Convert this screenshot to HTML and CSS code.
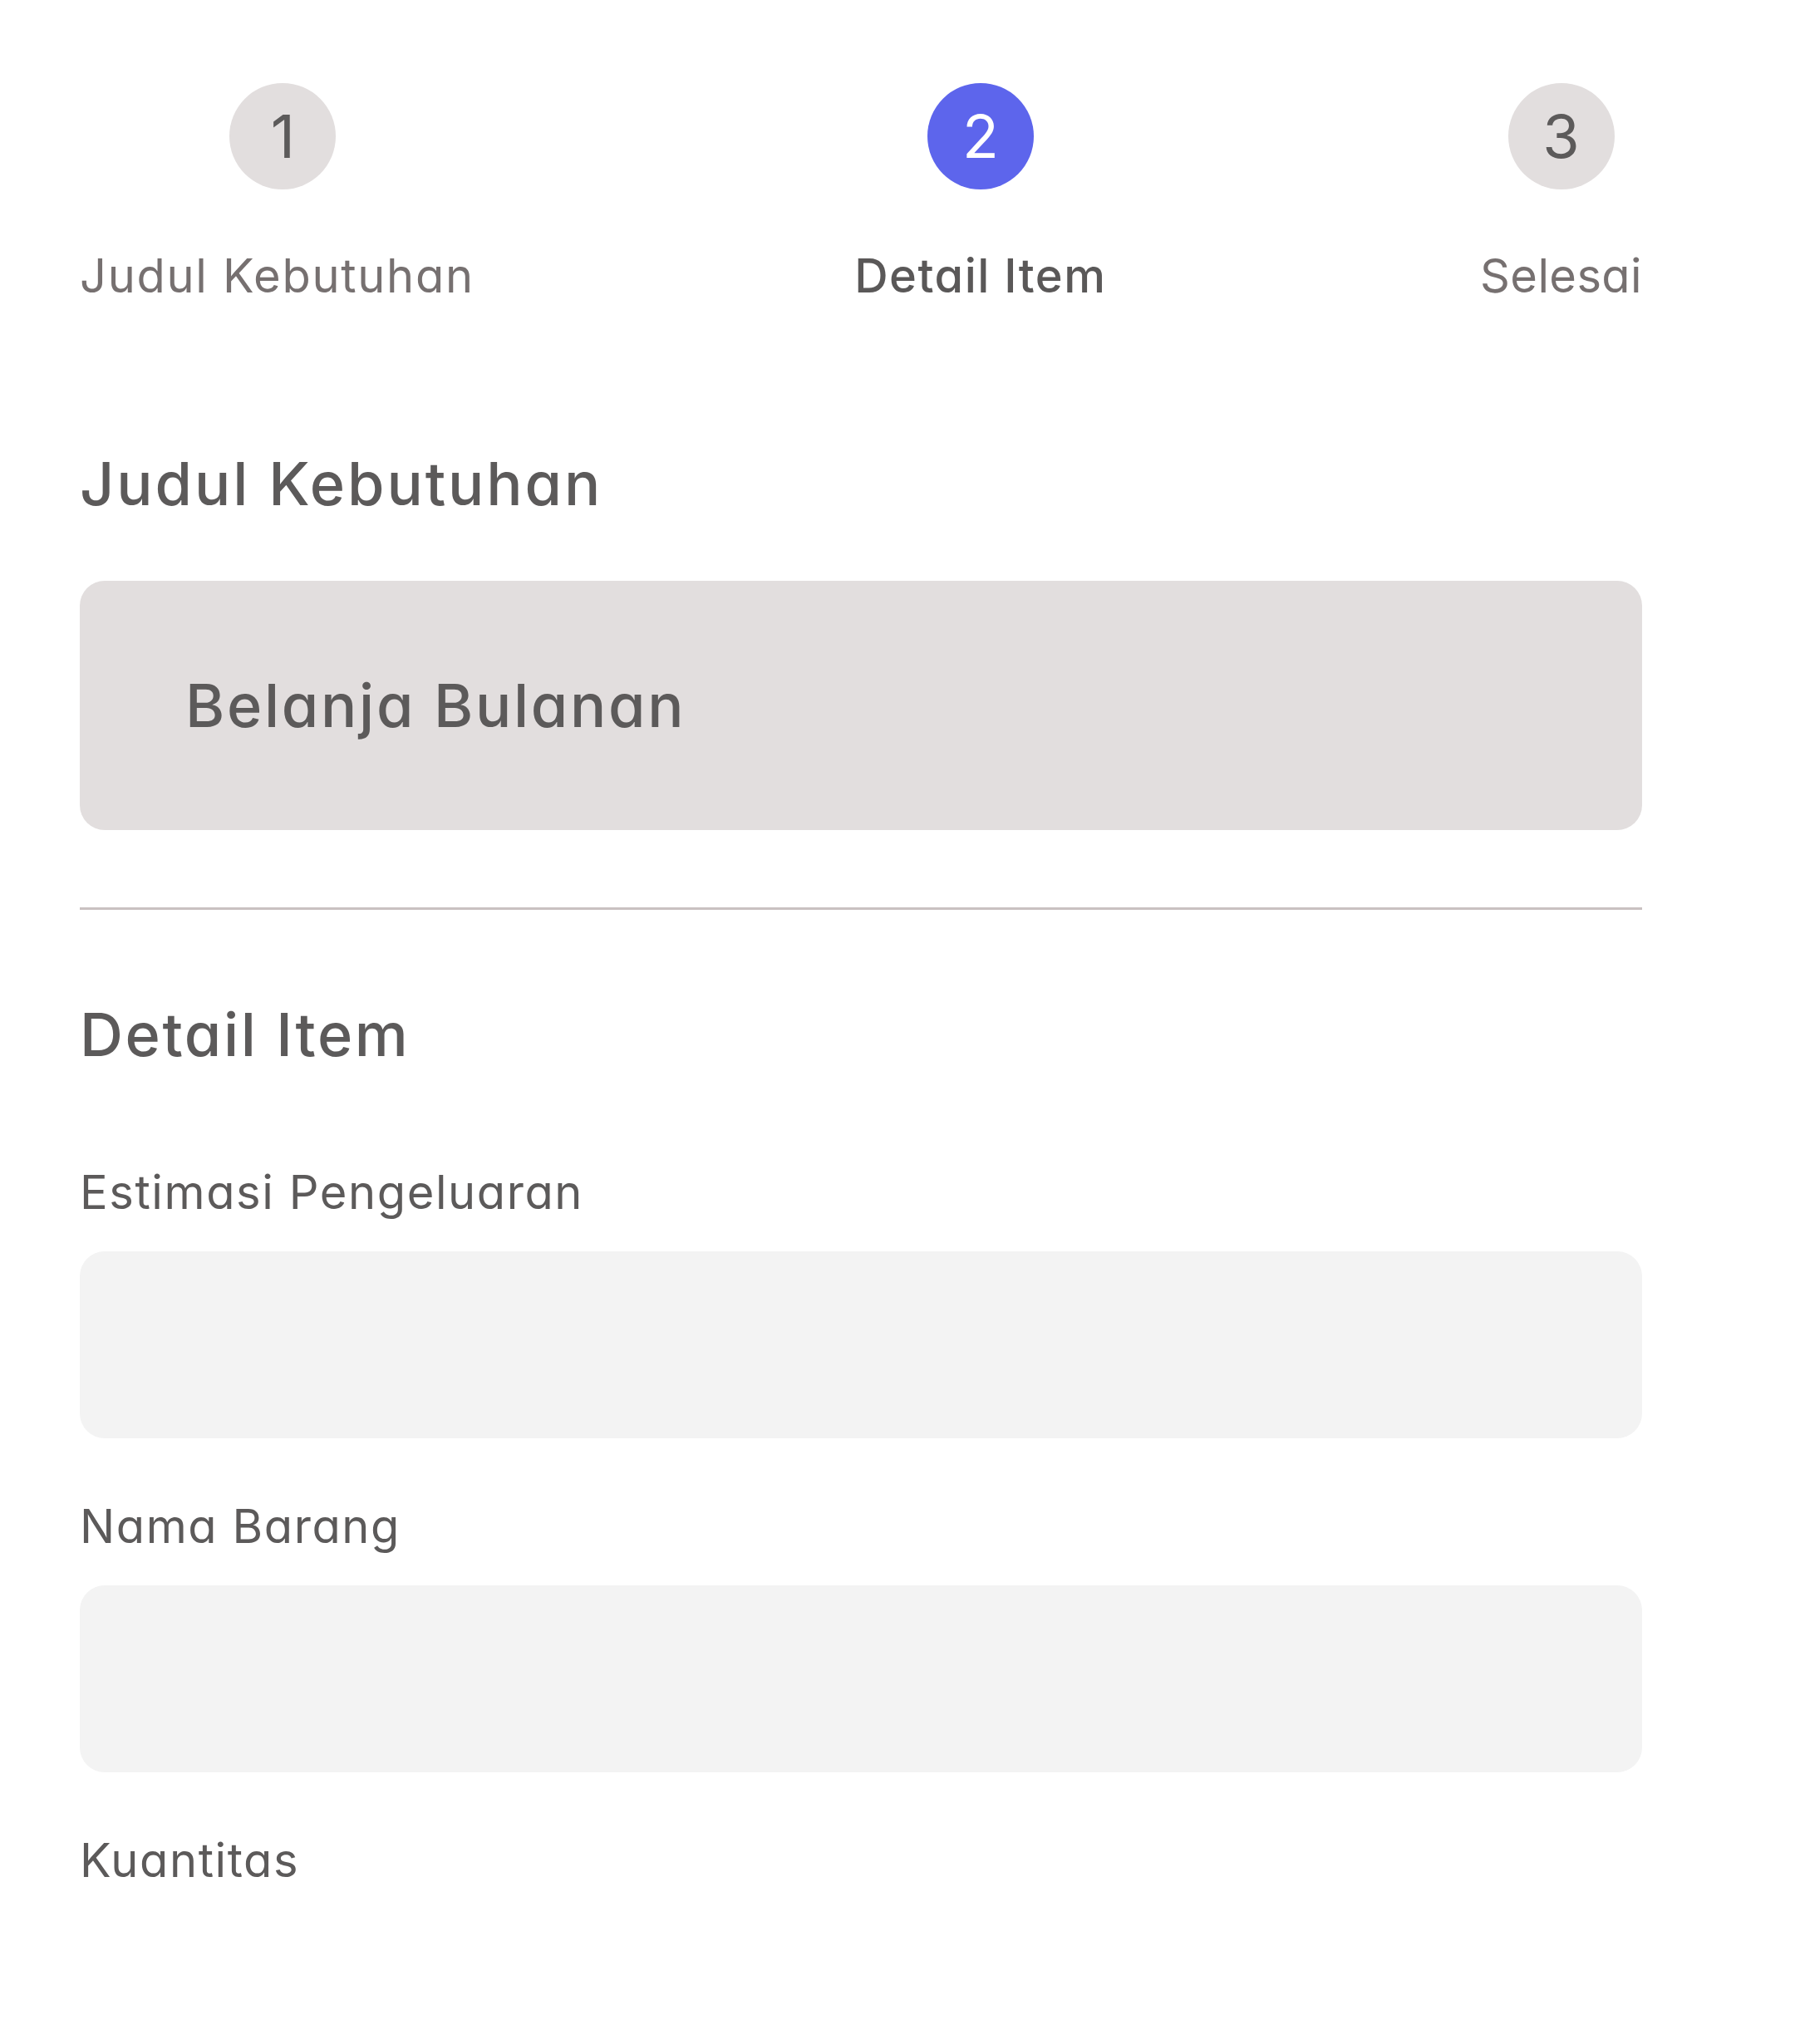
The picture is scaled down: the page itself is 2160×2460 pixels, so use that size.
FILE: index.html
```html
<!DOCTYPE html>
<html lang="id">
<head>
<meta charset="utf-8">
<title>Detail Item</title>
<link rel="stylesheet" href="styles.css">
</head>
<body>
<main class="page">
  <ol class="stepper">
    <li class="step step-first">
      <span class="step-circle">1</span>
      <span class="step-label">Judul Kebutuhan</span>
    </li>
    <li class="step step-active">
      <span class="step-circle">2</span>
      <span class="step-label">Detail Item</span>
    </li>
    <li class="step step-last">
      <span class="step-circle">3</span>
      <span class="step-label">Selesai</span>
    </li>
  </ol>

  <section class="section section-title">
    <h2 class="section-heading">Judul Kebutuhan</h2>
    <div class="title-box">Belanja Bulanan</div>
  </section>

  <hr class="divider">

  <section class="section section-detail">
    <h2 class="section-heading">Detail Item</h2>
    <div class="fields">
      <label class="field">
        <span class="field-label">Estimasi Pengeluaran</span>
        <span class="field-input"></span>
      </label>
      <label class="field">
        <span class="field-label">Nama Barang</span>
        <span class="field-input"></span>
      </label>
      <label class="field">
        <span class="field-label">Kuantitas</span>
      </label>
    </div>
  </section>
</main>
</body>
</html>
```
FILE: styles.css
```css
html, body {
  margin: 0;
  padding: 0;
  background: #ffffff;
}

body {
  font-family: "Inter", "Noto Sans", sans-serif;
  font-feature-settings: "cv11";
  color: #5c5a5a;
}

.page {
  width: 1880px;
  padding: 100px 0 0 96px;
  box-sizing: content-box;
}

.stepper {
  list-style: none;
  margin: 0;
  padding: 0;
  display: flex;
  justify-content: space-between;
  align-items: flex-start;
}

.step {
  display: flex;
  flex-direction: column;
  align-items: center;
}

.step-circle {
  width: 128px;
  height: 128px;
  border-radius: 50%;
  background: #e2dede;
  color: #5c5a5a;
  display: flex;
  align-items: center;
  justify-content: center;
  font-size: 72px;
  font-weight: 400;
  line-height: 1;
}

.step-label {
  margin-top: 62px;
  font-size: 56px;
  line-height: 84px;
  font-weight: 400;
  letter-spacing: 1.7px;
  color: #767070;
  white-space: nowrap;
}

.step-first .step-circle {
  margin-left: 14px;
}

.step-active {
  margin-left: 8px;
}

.step-active .step-circle {
  background: #5d65ec;
  color: #ffffff;
}

.step-active .step-label {
  font-weight: 500;
  letter-spacing: 1.5px;
  color: #5a5858;
}

.step-last .step-label {
  letter-spacing: 0.4px;
}

.section-heading {
  margin: 0;
  font-size: 72px;
  line-height: 108px;
  font-weight: 500;
  letter-spacing: 2.9px;
  color: #5c5a5a;
}

.section-detail .section-heading {
  letter-spacing: 2.6px;
}

.section-title {
  margin-top: 154px;
}

.title-box {
  margin-top: 63px;
  height: 300px;
  box-sizing: border-box;
  border-radius: 30px;
  background: #e2dede;
  display: flex;
  align-items: center;
  padding-left: 127px;
  font-size: 72px;
  line-height: 108px;
  font-weight: 500;
  letter-spacing: 2.7px;
  color: #5c5a5a;
}

.divider {
  margin: 93px 0 0 0;
  border: 0;
  height: 3px;
  background: #c9c1c1;
}

.section-detail {
  margin-top: 96px;
}

.fields {
  margin-top: 94px;
  display: flex;
  flex-direction: column;
  gap: 64px;
}

.field {
  display: flex;
  flex-direction: column;
  gap: 29px;
}

.field-label {
  font-size: 56px;
  line-height: 84px;
  font-weight: 400;
  letter-spacing: 1.6px;
  color: #5c5a5a;
}

.field-input {
  display: block;
  height: 225px;
  border-radius: 30px;
  background: #f3f3f3;
}
```
